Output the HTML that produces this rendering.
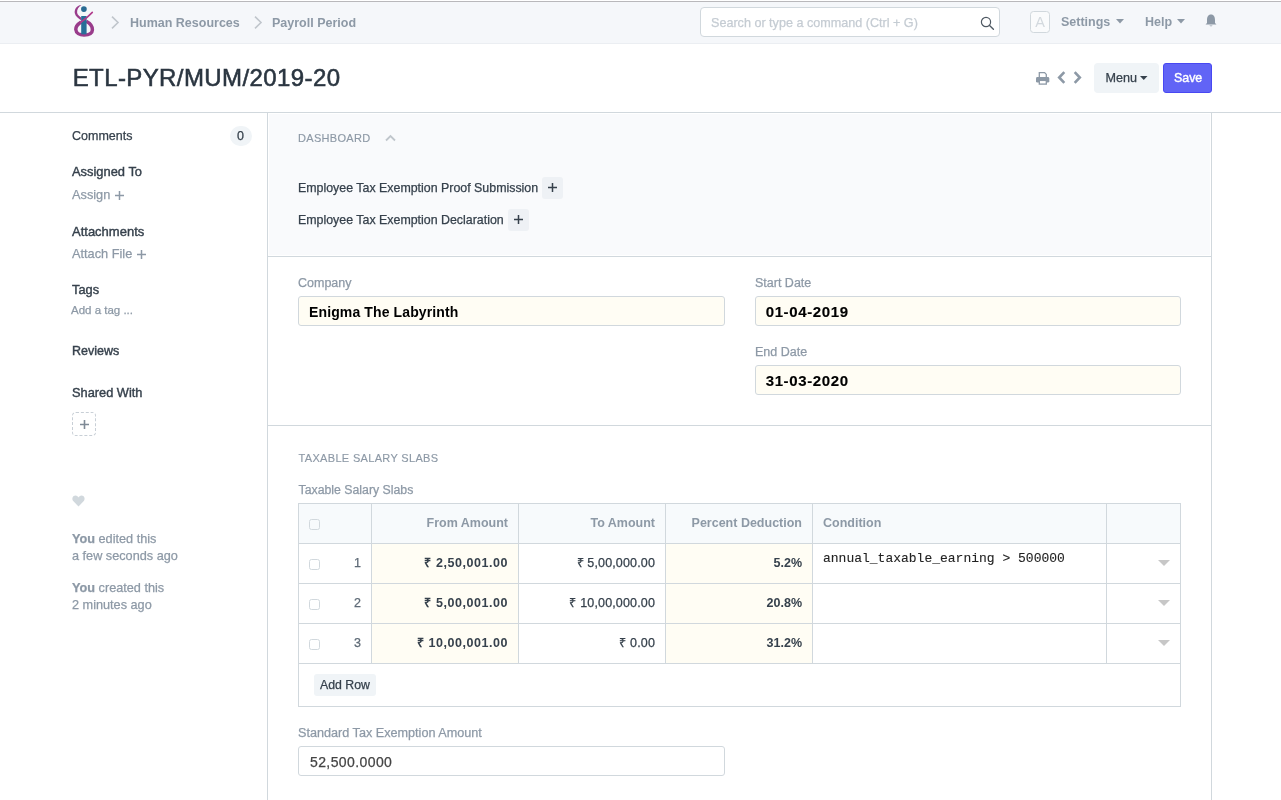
<!DOCTYPE html>
<html><head><meta charset="utf-8">
<style>
html,body{margin:0;padding:0;background:#fff;width:1281px;height:800px;overflow:hidden;position:relative;font-family:"Liberation Sans",sans-serif;}
.t{position:absolute;white-space:nowrap;-webkit-text-stroke-width:0.25px;}
.r{position:absolute;box-sizing:border-box;}
svg{position:absolute;overflow:visible;}
</style></head><body>
<div id="w" style="position:absolute;left:0;top:0;width:1281px;height:800px;will-change:transform">
<div class="r" style="left:0px;top:1px;width:1281px;height:1px;background:#b9b8bb"></div>
<div class="r" style="left:0px;top:2px;width:1281px;height:41px;background:#f5f7fa"></div>
<div class="r" style="left:0px;top:43px;width:1281px;height:1px;background:#ebeef2"></div>
<svg style="left:70px;top:2px;" width="30" height="40" viewBox="0 0 30 40"><path d="M11.4 3 C6.2 3.4, 4.2 8, 4.8 11.3 C5.4 14.5, 8.5 16.6, 11.5 18.6 L11.5 15.8 C9.8 14.6, 7.3 13, 7.1 10.6 C6.9 7.5, 8.6 4.6, 11.4 3 Z" fill="#993c8b"/><path d="M16.2 19.3 C20.5 21.5, 22.6 24.5, 22.4 28 C22.2 31.5, 18.5 33, 14 33 C9.5 33, 6 31, 5.8 27.5 C5.6 24, 8 22, 11.2 20" fill="none" stroke="#993c8b" stroke-width="3.5"/><rect x="11.2" y="14" width="5.4" height="18.3" fill="#276f98"/><circle cx="13.9" cy="7.1" r="2.85" fill="#2a6b94"/><path d="M10.5 20.5 C14 18, 18.5 14.5, 22.3 10.4" fill="none" stroke="#b13c8c" stroke-width="1.6" stroke-linecap="round"/></svg>
<svg style="left:111px;top:16px;" width="9" height="14" viewBox="0 0 9 14"><path d="M1 0.6 L7 6.5 L1 12.4" fill="none" stroke="#c0c6cc" stroke-width="1.6"/></svg>
<svg style="left:254px;top:16px;" width="9" height="14" viewBox="0 0 9 14"><path d="M1 0.6 L7 6.5 L1 12.4" fill="none" stroke="#c0c6cc" stroke-width="1.6"/></svg>
<div class="t" style="left:130px;top:17.42px;font-size:12.5px;line-height:12.5px;font-weight:700;color:#8d99a6;letter-spacing:0px;-webkit-text-stroke-width:0;">Human Resources</div>
<div class="t" style="left:272px;top:17.42px;font-size:12.5px;line-height:12.5px;font-weight:700;color:#8d99a6;letter-spacing:0px;-webkit-text-stroke-width:0;">Payroll Period</div>
<div class="r" style="left:700px;top:7px;width:300px;height:30px;border:1px solid #d1d8dd;border-radius:4px;background:#fff"></div>
<div class="t" style="left:711px;top:17.33px;font-size:12.6px;line-height:12.6px;font-weight:400;color:#c5ccd3;letter-spacing:0px;">Search or type a command (Ctrl + G)</div>
<svg style="left:980px;top:15.5px;" width="15" height="15" viewBox="0 0 15 15"><circle cx="6" cy="6" r="4.6" fill="none" stroke="#4f5963" stroke-width="1.2"/><path d="M9.3 9.3 L13.4 13.2" stroke="#4f5963" stroke-width="1.4" stroke-linecap="round"/></svg>
<div class="r" style="left:1030px;top:11px;width:20px;height:22px;border:1px solid #d1d8dd;border-radius:3.5px;background:#fafbfc"></div>
<div class="t" style="left:1035.3px;top:14.73px;font-size:14.5px;line-height:14.5px;font-weight:400;color:#d3d9de;letter-spacing:0px;-webkit-text-stroke-width:0;">A</div>
<div class="t" style="left:1061px;top:15.92px;font-size:12.5px;line-height:12.5px;font-weight:700;color:#8d99a6;letter-spacing:0px;-webkit-text-stroke-width:0;">Settings</div>
<svg style="left:1116px;top:19px;" width="9" height="5" viewBox="0 0 9 5"><path d="M0 0 L8 0 L4 4.5 Z" fill="#8d99a6"/></svg>
<div class="t" style="left:1145px;top:15.92px;font-size:12.5px;line-height:12.5px;font-weight:700;color:#8d99a6;letter-spacing:0px;-webkit-text-stroke-width:0;">Help</div>
<svg style="left:1177px;top:19px;" width="9" height="5" viewBox="0 0 9 5"><path d="M0 0 L8 0 L4 4.5 Z" fill="#8d99a6"/></svg>
<svg style="left:1205px;top:14px;" width="12" height="13" viewBox="0 0 12 13"><path d="M6 0.5 C3 0.5 2 3 2 6 L2 9 L0.5 10.5 L11.5 10.5 L10 9 L10 6 C10 3 9 0.5 6 0.5 Z" fill="#8d99a6"/><path d="M4.5 11.5 L7.5 11.5 C7.5 12.5 4.5 12.5 4.5 11.5Z" fill="#8d99a6"/></svg>
<div class="t" style="left:72.7px;top:65.68px;font-size:24px;line-height:24px;font-weight:400;color:#2b3641;letter-spacing:0.4px;-webkit-text-stroke:0.55px #2b3641;">ETL-PYR/MUM/2019-20</div>
<div class="r" style="left:0px;top:112px;width:1281px;height:1px;background:#d1d8dd"></div>
<svg style="left:1036px;top:72px;" width="14" height="13" viewBox="0 0 14 13"><path d="M3.3 5 V0.65 H8.6 L10.3 2.4 V5" fill="none" stroke="#8d99a6" stroke-width="1.3"/><rect x="0" y="5" width="13.3" height="5.6" rx="1.4" fill="#8d99a6"/><rect x="3.3" y="8.4" width="7" height="3.7" fill="#fff" stroke="#8d99a6" stroke-width="1.3"/></svg>
<svg style="left:1057px;top:71px;" width="10" height="13" viewBox="0 0 10 13"><path d="M7.3 1.2 L2.2 6.5 L7.3 11.8" fill="none" stroke="#8d99a6" stroke-width="2.6"/></svg>
<svg style="left:1073px;top:71px;" width="10" height="13" viewBox="0 0 10 13"><path d="M1.7 1.2 L6.8 6.5 L1.7 11.8" fill="none" stroke="#8d99a6" stroke-width="2.6"/></svg>
<div class="r" style="left:1094px;top:63px;width:65px;height:30px;background:#f0f4f7;border-radius:4px"></div>
<div class="t" style="left:1105.5px;top:72.33px;font-size:12.6px;line-height:12.6px;font-weight:400;color:#36414c;letter-spacing:0px;">Menu</div>
<svg style="left:1140px;top:76px;" width="8" height="5" viewBox="0 0 8 5"><path d="M0 0 L7.5 0 L3.75 4 Z" fill="#36414c"/></svg>
<div class="r" style="left:1163px;top:63px;width:49px;height:30px;background:#6164f6;border:1px solid #4848f2;border-radius:3px"></div>
<div class="t" style="left:1174px;top:72.00px;font-size:12.4px;line-height:12.4px;font-weight:400;color:#fff;letter-spacing:0px;-webkit-text-stroke-width:0.4px;">Save</div>
<div class="t" style="left:72px;top:130.42px;font-size:12.5px;line-height:12.5px;font-weight:400;color:#36414c;letter-spacing:0px;">Comments</div>
<div class="r" style="left:230px;top:126px;width:22px;height:20px;background:#f0f4f7;border-radius:10px"></div>
<div class="t" style="left:237px;top:130.42px;font-size:12.5px;line-height:12.5px;font-weight:400;color:#36414c;letter-spacing:0px;">0</div>
<div class="t" style="left:72px;top:165.58px;font-size:12.9px;line-height:12.9px;font-weight:400;color:#36414c;letter-spacing:0px;-webkit-text-stroke-width:0.4px;">Assigned To</div>
<div class="t" style="left:72px;top:189.21px;font-size:12.75px;line-height:12.75px;font-weight:400;color:#8d99a6;letter-spacing:0px;">Assign</div>
<svg style="left:115px;top:191px;" width="9" height="9" viewBox="0 0 9 9"><path d="M4.5 0 V9 M0 4.5 H9" stroke="#8d99a6" stroke-width="1.5"/></svg>
<div class="t" style="left:72px;top:224.50px;font-size:13px;line-height:13px;font-weight:400;color:#36414c;letter-spacing:0px;-webkit-text-stroke-width:0.4px;">Attachments</div>
<div class="t" style="left:72px;top:248.21px;font-size:12.75px;line-height:12.75px;font-weight:400;color:#8d99a6;letter-spacing:0px;">Attach File</div>
<svg style="left:137px;top:250px;" width="9" height="9" viewBox="0 0 9 9"><path d="M4.5 0 V9 M0 4.5 H9" stroke="#8d99a6" stroke-width="1.5"/></svg>
<div class="t" style="left:72px;top:284.16px;font-size:12.8px;line-height:12.8px;font-weight:400;color:#36414c;letter-spacing:0px;-webkit-text-stroke-width:0.4px;">Tags</div>
<div class="t" style="left:71px;top:304.77px;font-size:11.5px;line-height:11.5px;font-weight:400;color:#8d99a6;letter-spacing:0px;">Add a tag ...</div>
<div class="t" style="left:72px;top:345.42px;font-size:12.5px;line-height:12.5px;font-weight:400;color:#36414c;letter-spacing:0px;-webkit-text-stroke-width:0.4px;">Reviews</div>
<div class="t" style="left:72px;top:387.16px;font-size:12.8px;line-height:12.8px;font-weight:400;color:#36414c;letter-spacing:0px;-webkit-text-stroke-width:0.4px;">Shared With</div>
<div class="r" style="left:72px;top:412px;width:24px;height:24px;border:1px dashed #c8cfd6;border-radius:4px"></div>
<svg style="left:79.5px;top:419.5px;" width="9" height="9" viewBox="0 0 9 9"><path d="M4.5 0 V9 M0 4.5 H9" stroke="#7f8a96" stroke-width="1.6"/></svg>
<svg style="left:72px;top:495px;" width="13" height="12" viewBox="0 0 13 12"><path d="M6.5 11.5 L1.2 6 C-0.5 4 0.5 0.5 3.5 0.5 C5 0.5 6 1.5 6.5 2.5 C7 1.5 8 0.5 9.5 0.5 C12.5 0.5 13.5 4 11.8 6 Z" fill="#d1d8dd"/></svg>
<div class="t" style="left:72px;top:533.25px;font-size:12.7px;line-height:12.7px;font-weight:400;color:#8d99a6;letter-spacing:0px;"><b>You</b> edited this</div>
<div class="t" style="left:72px;top:550.25px;font-size:12.7px;line-height:12.7px;font-weight:400;color:#8d99a6;letter-spacing:0px;">a few seconds ago</div>
<div class="t" style="left:72px;top:582.25px;font-size:12.7px;line-height:12.7px;font-weight:400;color:#8d99a6;letter-spacing:0px;"><b>You</b> created this</div>
<div class="t" style="left:72px;top:599.25px;font-size:12.7px;line-height:12.7px;font-weight:400;color:#8d99a6;letter-spacing:0px;">2 minutes ago</div>
<div class="r" style="left:267px;top:113px;width:1px;height:687px;background:#d1d8dd"></div>
<div class="r" style="left:1211px;top:113px;width:1px;height:687px;background:#d1d8dd"></div>
<div class="r" style="left:269px;top:114px;width:941px;height:141px;background:#f9fafc"></div>
<div class="r" style="left:268px;top:256px;width:943px;height:1px;background:#d1d8dd"></div>
<div class="t" style="left:298px;top:132.69px;font-size:11px;line-height:11px;font-weight:400;color:#8d99a6;letter-spacing:0.32px;-webkit-text-stroke:0.15px #8d99a6;">DASHBOARD</div>
<svg style="left:385px;top:134px;" width="11" height="8" viewBox="0 0 11 8"><path d="M1 6.5 L5.5 2 L10 6.5" fill="none" stroke="#c0c6cc" stroke-width="1.8"/></svg>
<div class="t" style="left:298px;top:182.00px;font-size:12.4px;line-height:12.4px;font-weight:400;color:#36414c;letter-spacing:0px;">Employee Tax Exemption Proof Submission</div>
<div class="r" style="left:542px;top:177px;width:21px;height:22px;background:#eef1f5;border-radius:3px"></div>
<svg style="left:548px;top:183px;" width="9" height="9" viewBox="0 0 9 9"><path d="M4.5 0 V9 M0 4.5 H9" stroke="#36414c" stroke-width="1.5"/></svg>
<div class="t" style="left:298px;top:214.00px;font-size:12.4px;line-height:12.4px;font-weight:400;color:#36414c;letter-spacing:0px;">Employee Tax Exemption Declaration</div>
<div class="r" style="left:508px;top:209px;width:21px;height:22px;background:#eef1f5;border-radius:3px"></div>
<svg style="left:514px;top:215px;" width="9" height="9" viewBox="0 0 9 9"><path d="M4.5 0 V9 M0 4.5 H9" stroke="#36414c" stroke-width="1.5"/></svg>
<div class="t" style="left:298px;top:277.42px;font-size:12.5px;line-height:12.5px;font-weight:400;color:#8d99a6;letter-spacing:0px;">Company</div>
<div class="r" style="left:298px;top:296px;width:427px;height:30px;background:#fffdf4;border:1px solid #d1d8dd;border-radius:3px"></div>
<div class="t" style="left:309px;top:304.65px;font-size:14px;line-height:14px;font-weight:700;color:#000;letter-spacing:0.12px;-webkit-text-stroke-width:0;">Enigma The Labyrinth</div>
<div class="t" style="left:755px;top:277.42px;font-size:12.5px;line-height:12.5px;font-weight:400;color:#8d99a6;letter-spacing:0px;">Start Date</div>
<div class="r" style="left:755px;top:296px;width:426px;height:30px;background:#fffdf4;border:1px solid #d1d8dd;border-radius:3px"></div>
<div class="t" style="left:765.7px;top:303.80px;font-size:15px;line-height:15px;font-weight:700;color:#000;letter-spacing:0.62px;-webkit-text-stroke-width:0.15px;">01-04-2019</div>
<div class="t" style="left:755px;top:346.42px;font-size:12.5px;line-height:12.5px;font-weight:400;color:#8d99a6;letter-spacing:0px;">End Date</div>
<div class="r" style="left:755px;top:365px;width:426px;height:30px;background:#fffdf4;border:1px solid #d1d8dd;border-radius:3px"></div>
<div class="t" style="left:765.7px;top:372.80px;font-size:15px;line-height:15px;font-weight:700;color:#000;letter-spacing:0.62px;-webkit-text-stroke-width:0.15px;">31-03-2020</div>
<div class="r" style="left:268px;top:425px;width:943px;height:1px;background:#d1d8dd"></div>
<div class="t" style="left:298.5px;top:453.19px;font-size:11px;line-height:11px;font-weight:400;color:#8d99a6;letter-spacing:0.33px;-webkit-text-stroke-width:0.15px;">TAXABLE SALARY SLABS</div>
<div class="t" style="left:298.5px;top:483.59px;font-size:12.3px;line-height:12.3px;font-weight:400;color:#8d99a6;letter-spacing:0px;">Taxable Salary Slabs</div>
<div class="r" style="left:298px;top:503px;width:883px;height:40px;background:#f7fafc;border-radius:3px 3px 0 0"></div>
<div class="r" style="left:372px;top:544px;width:146px;height:39px;background:#fffdf4"></div>
<div class="r" style="left:666px;top:544px;width:146px;height:39px;background:#fffdf4"></div>
<div class="r" style="left:372px;top:584px;width:146px;height:39px;background:#fffdf4"></div>
<div class="r" style="left:666px;top:584px;width:146px;height:39px;background:#fffdf4"></div>
<div class="r" style="left:372px;top:624px;width:146px;height:39px;background:#fffdf4"></div>
<div class="r" style="left:666px;top:624px;width:146px;height:39px;background:#fffdf4"></div>
<div class="r" style="left:298px;top:503px;width:883px;height:1px;background:#d1d8dd"></div>
<div class="r" style="left:298px;top:543px;width:883px;height:1px;background:#d1d8dd"></div>
<div class="r" style="left:298px;top:583px;width:883px;height:1px;background:#d1d8dd"></div>
<div class="r" style="left:298px;top:623px;width:883px;height:1px;background:#d1d8dd"></div>
<div class="r" style="left:298px;top:663px;width:883px;height:1px;background:#d1d8dd"></div>
<div class="r" style="left:298px;top:503px;width:1px;height:160px;background:#d1d8dd"></div>
<div class="r" style="left:371px;top:503px;width:1px;height:160px;background:#d1d8dd"></div>
<div class="r" style="left:518px;top:503px;width:1px;height:160px;background:#d1d8dd"></div>
<div class="r" style="left:665px;top:503px;width:1px;height:160px;background:#d1d8dd"></div>
<div class="r" style="left:812px;top:503px;width:1px;height:160px;background:#d1d8dd"></div>
<div class="r" style="left:1106px;top:503px;width:1px;height:160px;background:#d1d8dd"></div>
<div class="r" style="left:1180px;top:503px;width:1px;height:160px;background:#d1d8dd"></div>
<div class="r" style="left:298px;top:663px;width:883px;height:44px;border:1px solid #d1d8dd;border-top:none"></div>
<div class="r" style="left:314px;top:674px;width:62px;height:22px;background:#f0f4f7;border-radius:3px"></div>
<div class="t" style="left:320px;top:678.59px;font-size:12.3px;line-height:12.3px;font-weight:400;color:#36414c;letter-spacing:0px;">Add Row</div>
<div class="r" style="left:309px;top:519px;width:11px;height:11px;border:1px solid #d1d8dd;border-radius:2.5px"></div>
<div class="t" style="right:773px;top:517.42px;font-size:12.5px;line-height:12.5px;font-weight:700;color:#8d99a6;letter-spacing:0px;-webkit-text-stroke-width:0;">From Amount</div>
<div class="t" style="right:626px;top:517.42px;font-size:12.5px;line-height:12.5px;font-weight:700;color:#8d99a6;letter-spacing:0px;-webkit-text-stroke-width:0;">To Amount</div>
<div class="t" style="right:479px;top:517.42px;font-size:12.5px;line-height:12.5px;font-weight:700;color:#8d99a6;letter-spacing:0px;-webkit-text-stroke-width:0;">Percent Deduction</div>
<div class="t" style="left:823px;top:517.42px;font-size:12.5px;line-height:12.5px;font-weight:700;color:#8d99a6;letter-spacing:0px;-webkit-text-stroke-width:0;">Condition</div>
<div class="r" style="left:309px;top:559px;width:11px;height:11px;border:1px solid #d1d8dd;border-radius:2.5px"></div>
<div class="t" style="right:920px;top:557.42px;font-size:12.5px;line-height:12.5px;font-weight:400;color:#5f6b77;letter-spacing:0px;">1</div>
<div class="t" style="right:773px;top:557.42px;font-size:12.5px;line-height:12.5px;font-weight:700;color:#36414c;letter-spacing:0.55px;-webkit-text-stroke-width:0;">₹ 2,50,001.00</div>
<div class="t" style="right:626px;top:557.42px;font-size:12.5px;line-height:12.5px;font-weight:400;color:#36414c;letter-spacing:0.15px;">₹ 5,00,000.00</div>
<div class="t" style="right:479px;top:557.42px;font-size:12.5px;line-height:12.5px;font-weight:700;color:#36414c;letter-spacing:0px;-webkit-text-stroke-width:0;">5.2%</div>
<svg style="left:1158px;top:560px;" width="12" height="7" viewBox="0 0 12 7"><path d="M0 0 L12 0 L6 6 Z" fill="#c7c7c7"/></svg>
<div class="r" style="left:309px;top:599px;width:11px;height:11px;border:1px solid #d1d8dd;border-radius:2.5px"></div>
<div class="t" style="right:920px;top:597.42px;font-size:12.5px;line-height:12.5px;font-weight:400;color:#5f6b77;letter-spacing:0px;">2</div>
<div class="t" style="right:773px;top:597.42px;font-size:12.5px;line-height:12.5px;font-weight:700;color:#36414c;letter-spacing:0.55px;-webkit-text-stroke-width:0;">₹ 5,00,001.00</div>
<div class="t" style="right:626px;top:597.42px;font-size:12.5px;line-height:12.5px;font-weight:400;color:#36414c;letter-spacing:0.15px;">₹ 10,00,000.00</div>
<div class="t" style="right:479px;top:597.42px;font-size:12.5px;line-height:12.5px;font-weight:700;color:#36414c;letter-spacing:0px;-webkit-text-stroke-width:0;">20.8%</div>
<svg style="left:1158px;top:600px;" width="12" height="7" viewBox="0 0 12 7"><path d="M0 0 L12 0 L6 6 Z" fill="#c7c7c7"/></svg>
<div class="r" style="left:309px;top:639px;width:11px;height:11px;border:1px solid #d1d8dd;border-radius:2.5px"></div>
<div class="t" style="right:920px;top:637.42px;font-size:12.5px;line-height:12.5px;font-weight:400;color:#5f6b77;letter-spacing:0px;">3</div>
<div class="t" style="right:773px;top:637.42px;font-size:12.5px;line-height:12.5px;font-weight:700;color:#36414c;letter-spacing:0.55px;-webkit-text-stroke-width:0;">₹ 10,00,001.00</div>
<div class="t" style="right:626px;top:637.42px;font-size:12.5px;line-height:12.5px;font-weight:400;color:#36414c;letter-spacing:0.15px;">₹ 0.00</div>
<div class="t" style="right:479px;top:637.42px;font-size:12.5px;line-height:12.5px;font-weight:700;color:#36414c;letter-spacing:0px;-webkit-text-stroke-width:0;">31.2%</div>
<svg style="left:1158px;top:640px;" width="12" height="7" viewBox="0 0 12 7"><path d="M0 0 L12 0 L6 6 Z" fill="#c7c7c7"/></svg>
<div class="t" style="left:823px;top:552.18px;font-size:13px;line-height:13px;font-weight:400;color:#222;letter-spacing:0px;font-family:'Liberation Mono', monospace;-webkit-text-stroke-width:0.1px;">annual_taxable_earning &gt; 500000</div>
<div class="t" style="left:298px;top:727.29px;font-size:12.65px;line-height:12.65px;font-weight:400;color:#8d99a6;letter-spacing:0px;">Standard Tax Exemption Amount</div>
<div class="r" style="left:298px;top:746px;width:427px;height:30px;background:#fff;border:1px solid #d1d8dd;border-radius:3px"></div>
<div class="t" style="left:310px;top:755.15px;font-size:14px;line-height:14px;font-weight:400;color:#444;letter-spacing:0.4px;">52,500.0000</div>

</div>
</body></html>
